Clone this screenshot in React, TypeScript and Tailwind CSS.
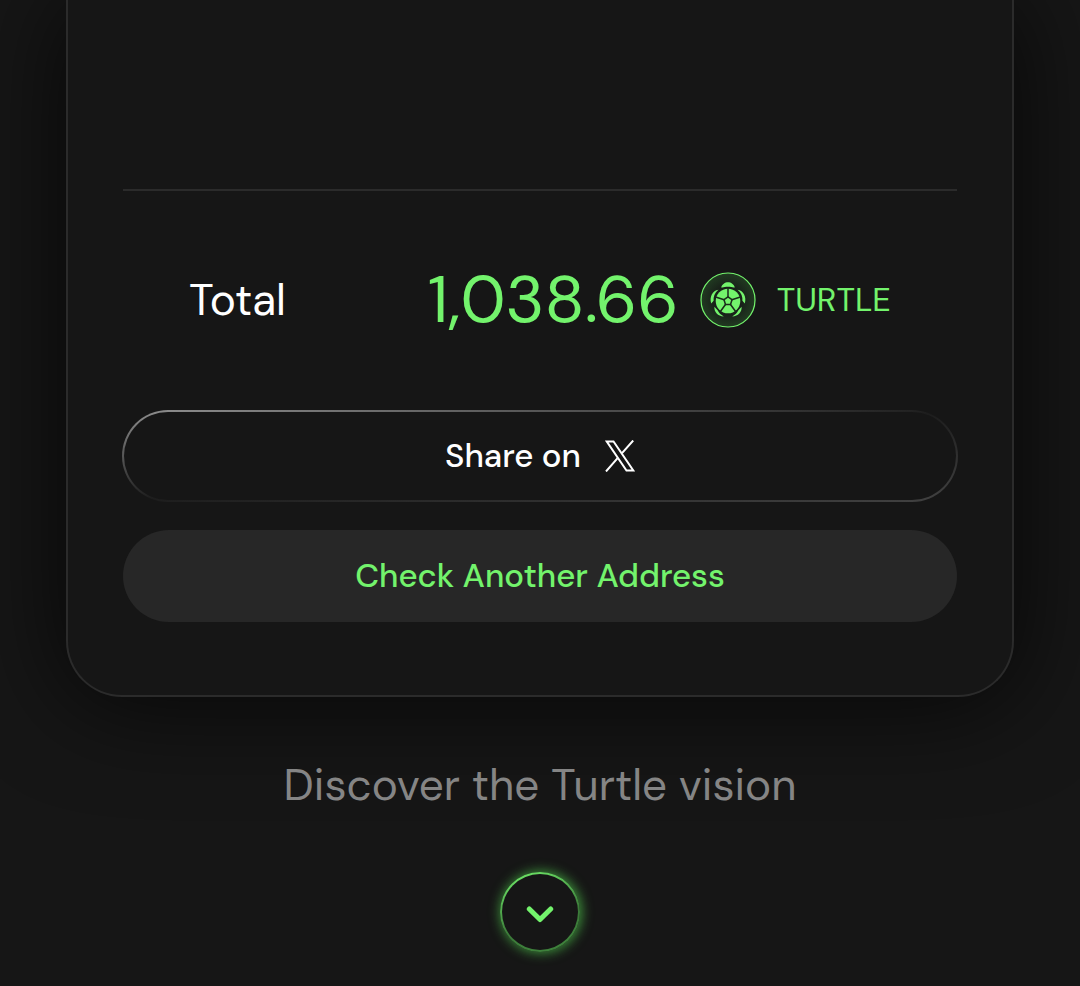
import React from 'react';

function TurtleIcon() {
  return (
    <svg className="size-14 shrink-0" viewBox="0 0 56 56" fill="none" aria-hidden="true">
      <defs>
        <radialGradient id="coin" cx="50%" cy="50%" r="50%">
          <stop offset="0%" stopColor="#161616" />
          <stop offset="50%" stopColor="#182019" />
          <stop offset="100%" stopColor="#213a21" />
        </radialGradient>
      </defs>
      <circle cx="28" cy="28" r="27" fill="url(#coin)" stroke="#73f36c" strokeWidth="1.2" />
      {/* Head and flippers */}
      <g fill="#73f36c">
        <path d="M21.200 15.400C22 12.200 25 10.200 28 10.200s6 2 6.800 5.200c-2 .4-4-.6-6.800-.6s-4.800 1-6.800.6Z" />
        <path d="M18.400 17.800C12.500 18.600 9.200 25 11.200 31.400l2.400-2.600C13.200 25 14.600 21.200 18.400 17.800Z" />
        <path d="M37.600 17.800C43.500 18.600 46.800 25 44.800 31.400l-2.400-2.600C42.800 25 41.400 21.200 37.600 17.800Z" />
        <path d="M14.400 34.800C14 40 17.800 44.400 23.800 44.400C20.700 42.600 18.800 40.800 17.600 38.200Z" />
        <path d="M41.600 34.800C42 40 38.200 44.400 32.200 44.400C35.300 42.600 37.200 40.800 38.400 38.200Z" />
      </g>
      {/* Shell */}
      <circle cx="28" cy="29" r="12.300" fill="#73f36c" />
      <path
        d="M28 29V16M28 29L40.400 25M28 29L35.600 39.500M28 29L20.400 39.500M28 29L15.600 25"
        stroke="#1a2a1b"
        strokeWidth="1.500"
      />
      <path
        d="M28 24.800L32 27.700L30.500 32.400H25.500L24 27.700Z"
        fill="#73f36c"
        stroke="#1a2a1b"
        strokeWidth="1.500"
        strokeLinejoin="round"
      />
    </svg>
  );
}

function XIcon() {
  return (
    <svg className="h-8 w-[30px]" viewBox="0 0 30 32" fill="none" stroke="#fff" strokeWidth="2" aria-hidden="true">
      <path d="M1.800 1.500H8.500L28.300 30.500H21.500Z" />
      <path d="M28.200 .5L17 13.200M1 31.500L12.600 18.200" />
    </svg>
  );
}

function App() {
  return (
    <main className="min-h-screen overflow-hidden bg-[#161616] font-['DM_Sans','Inter',sans-serif] text-white">
      <section className="mx-[66px] rounded-b-[56px] border-2 border-t-0 border-[#2b2b2b] bg-[#161616] px-[55px] pb-[73px] pt-[189px] shadow-[0_4px_100px_0_rgba(0,0,0,0.75)]">
        <div className="flex items-center justify-between border-t-2 border-[#2b2b2b] px-[66px] pb-[70px] pt-[69px]">
          <span className="text-[44px] leading-[80px]">Total</span>
          <div className="flex items-center gap-[21px] text-[#73f36c]">
            <span className="text-[66px] leading-[80px]">1,038.66</span>
            <TurtleIcon />
            <span className="text-[33px]">TURTLE</span>
          </div>
        </div>

        <div className="flex flex-col gap-7 text-[33px] font-medium">
          <button className="-mx-px flex h-[92px] items-center justify-center gap-6 rounded-full border-2 border-transparent [background:linear-gradient(#161616,#161616)_padding-box,linear-gradient(to_bottom_right,#919191,#1d1d1d_50%,#424242)_border-box]">
            Share on
            <XIcon />
          </button>
          <button className="h-[92px] rounded-full bg-[#272727] text-[#73f36c]">
            Check Another Address
          </button>
        </div>
      </section>

      <div className="relative flex flex-col items-center pb-8 pt-[58px]">
        <p className="text-[44px] leading-[60px] text-[#858585]">Discover the Turtle vision</p>
        <button
          aria-label="Scroll down"
          className="mt-[57px] flex size-20 items-center justify-center rounded-full border-2 border-transparent shadow-[1px_0_12px_1px_rgba(75,190,72,0.75)] [background:linear-gradient(#161616,#161616)_padding-box,linear-gradient(160deg,#73f36c,#3b7a39_60%,#3f853c)_border-box]"
        >
          <svg className="h-6 w-7" viewBox="0 0 28 24" fill="none" aria-hidden="true">
            <path d="M3.300 9L14 19.500L24.700 9" stroke="#73f36c" strokeWidth="5" strokeLinecap="round" strokeLinejoin="round" />
          </svg>
        </button>
      </div>
    </main>
  );
}

export default App;
